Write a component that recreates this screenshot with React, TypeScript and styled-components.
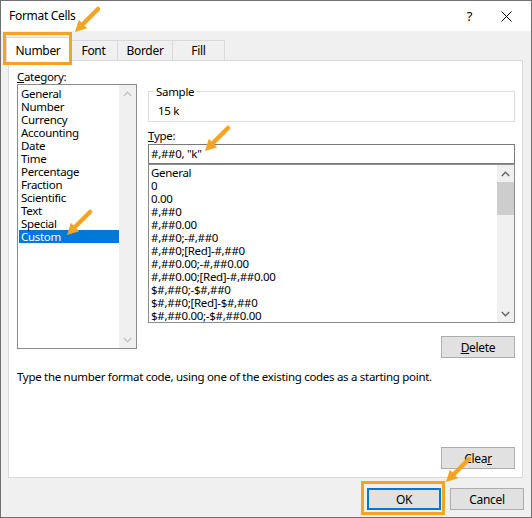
import * as React from "react";
import styled, { createGlobalStyle } from "styled-components";

const GlobalStyle = createGlobalStyle`
  html, body {
    margin: 0;
    padding: 0;
    background: #ffffff;
  }
`;

const ORANGE = "#f4a423";
const FONT = `"Noto Sans", "Open Sans", sans-serif`;

const Window = styled.div`
  position: relative;
  width: 532px;
  height: 518px;
  box-sizing: border-box;
  border: 1px solid #6f6f6f;
  display: flex;
  flex-direction: column;
  background: #f0f0f0;
  font-family: ${FONT};
  font-size: 11.5px;
  letter-spacing: -0.3px;
  color: #000;
`;

const TitleBar = styled.div`
  height: 30px;
  flex-shrink: 0;
  display: flex;
  align-items: center;
  padding: 0 19px 0 8px;
  background: #ffffff;
`;

const Title = styled.span`
  font-size: 12px;
  line-height: 14px;
`;

const TitleControls = styled.div`
  margin-left: auto;
  display: flex;
  align-items: center;
  gap: 29px;
`;

const HelpGlyph = styled.span`
  font-size: 13px;
  line-height: 14px;
`;

const Body = styled.div`
  flex: 1;
  display: flex;
  flex-direction: column;
  padding: 0 8px 0 5px;
`;

const TabRow = styled.div`
  display: flex;
  align-items: flex-end;
  height: 23px;
  margin-top: 6px;
`;

const Tab = styled.div<{ $active?: boolean; $w: number }>`
  width: ${(p) => p.$w}px;
  height: ${(p) => (p.$active ? 24 : 20)}px;
  box-sizing: border-box;
  display: flex;
  align-items: center;
  justify-content: center;
  border: 1px solid #d9d9d9;
  border-bottom: none;
  margin-left: ${(p) => (p.$active ? 0 : -1)}px;
  margin-bottom: ${(p) => (p.$active ? -1 : 0)}px;
  background: ${(p) => (p.$active ? "#ffffff" : "#f0f0f0")};
  position: relative;
  z-index: ${(p) => (p.$active ? 2 : 1)};
  font-size: 12px;
  padding-top: ${(p) => (p.$active ? 1 : 0)}px;
`;

const Panel = styled.div`
  height: 418px;
  margin-left: 2px;
  box-sizing: border-box;
  background: #ffffff;
  border: 1px solid #d9d9d9;
  padding: 8px 7px 8px 8px;
  display: flex;
  flex-direction: column;
`;

const Columns = styled.div`
  display: grid;
  grid-template-columns: 120px 1fr;
  column-gap: 11px;
`;

const Column = styled.div<{ $offset?: number }>`
  display: flex;
  flex-direction: column;
  padding-top: ${(p) => p.$offset ?? 0}px;
`;

const Label = styled.div<{ $mt?: number }>`
  line-height: 15px;
  margin-top: ${(p) => p.$mt ?? 0}px;
`;

const ListBox = styled.div<{ $h: number }>`
  height: ${(p) => p.$h}px;
  box-sizing: border-box;
  border: 1px solid #8c8c8c;
  display: flex;
  background: #ffffff;
`;

const Items = styled.div<{ $pad: string }>`
  flex: 1;
  padding: ${(p) => p.$pad};
  overflow: hidden;
`;

const Item = styled.div<{ $selected?: boolean }>`
  height: 13px;
  line-height: 13px;
  padding-left: 2px;
  white-space: nowrap;
  background: ${(p) => (p.$selected ? "#0078d7" : "transparent")};
  color: ${(p) => (p.$selected ? "#ffffff" : "#000000")};
`;

const ScrollBar = styled.div`
  width: 17px;
  flex-shrink: 0;
  display: flex;
  flex-direction: column;
  background: #f0f0f0;
`;

const ScrollArrow = styled.div`
  height: 17px;
  display: flex;
  align-items: center;
  justify-content: center;
  flex-shrink: 0;
`;

const ScrollTrack = styled.div`
  flex: 1;
`;

const ScrollThumb = styled.div`
  height: 33px;
  background: #cdcdcd;
`;

const GroupBox = styled.fieldset`
  margin: 0;
  height: 38px;
  box-sizing: border-box;
  border: 1px solid #dcdcdc;
  padding: 4px 8px 0 9px;
`;

const Legend = styled.legend`
  padding: 0 2px;
  margin-left: -4px;
  line-height: 15px;
`;

const SampleValue = styled.div`
  line-height: 15px;
`;

const TextInput = styled.div`
  height: 20px;
  margin-top: 1px;
  box-sizing: border-box;
  border: 1px solid #7a7a7a;
  padding: 0 2px;
  line-height: 18px;
  white-space: pre;
`;

const Button = styled.div<{ $default?: boolean }>`
  width: 74px;
  height: 22px;
  box-sizing: border-box;
  display: flex;
  align-items: center;
  justify-content: center;
  background: #e1e1e1;
  border: 1px solid ${(p) => (p.$default ? "#0078d7" : "#adadad")};
  box-shadow: ${(p) => (p.$default ? "inset 0 0 0 1px #0078d7" : "none")};
  font-size: 12px;
  flex-shrink: 0;
`;

const RightAligned = styled.div<{ $mt?: number }>`
  display: flex;
  justify-content: flex-end;
  margin-top: ${(p) => p.$mt ?? 0}px;
`;

const Description = styled.div`
  margin-top: 11px;
  line-height: 15px;
  white-space: nowrap;
`;

const Spacer = styled.div`
  flex: 1;
`;

const Footer = styled.div`
  flex: 1;
  display: flex;
  justify-content: flex-end;
  align-items: flex-start;
  gap: 9px;
  padding-top: 10px;
  margin-right: -1px;
`;

const HighlightBox = styled.div<{ $x: number; $y: number; $w: number; $h: number }>`
  position: absolute;
  left: ${(p) => p.$x}px;
  top: ${(p) => p.$y}px;
  width: ${(p) => p.$w}px;
  height: ${(p) => p.$h}px;
  box-sizing: border-box;
  border: 3px solid ${ORANGE};
  pointer-events: none;
  z-index: 5;
`;

const ArrowWrap = styled.svg<{ $x: number; $y: number }>`
  position: absolute;
  left: ${(p) => p.$x}px;
  top: ${(p) => p.$y}px;
  width: 30px;
  height: 30px;
  z-index: 6;
  pointer-events: none;
`;

// tip of the arrow sits at (2, 28) inside the svg
const Arrow = ({ tipX, tipY }: { tipX: number; tipY: number }) => (
  <ArrowWrap $x={tipX - 3} $y={tipY - 29} viewBox="0 0 30 30">
    <line x1="25" y1="5" x2="10" y2="20" stroke={ORANGE} strokeWidth="4.5" strokeLinecap="round" />
    <polygon points="2,28 14.2,24.2 5.8,15.8" fill={ORANGE} />
  </ArrowWrap>
);

const Chevron = ({ up, color }: { up?: boolean; color: string }) => (
  <svg width="9" height="6" viewBox="0 0 9 6">
    <polyline
      points={up ? "0.8,5 4.5,1.2 8.2,5" : "0.8,1 4.5,4.8 8.2,1"}
      fill="none"
      stroke={color}
      strokeWidth="1.3"
    />
  </svg>
);

const CloseIcon = () => (
  <svg width="11" height="11" viewBox="0 0 11 11">
    <path d="M0.5 0.5 L10.5 10.5 M10.5 0.5 L0.5 10.5" stroke="#000" strokeWidth="1" />
  </svg>
);

const categories = [
  "General",
  "Number",
  "Currency",
  "Accounting",
  "Date",
  "Time",
  "Percentage",
  "Fraction",
  "Scientific",
  "Text",
  "Special",
  "Custom",
];

const formats = [
  "General",
  "0",
  "0.00",
  "#,##0",
  "#,##0.00",
  "#,##0;-#,##0",
  "#,##0;[Red]-#,##0",
  "#,##0.00;-#,##0.00",
  "#,##0.00;[Red]-#,##0.00",
  "$#,##0;-$#,##0",
  "$#,##0;[Red]-$#,##0",
  "$#,##0.00;-$#,##0.00",
];

const tabs = [
  { label: "Number", w: 64 },
  { label: "Font", w: 49 },
  { label: "Border", w: 56 },
  { label: "Fill", w: 53 },
];

const App = () => (
  <>
    <GlobalStyle />
    <Window>
      <TitleBar>
        <Title>Format Cells</Title>
        <TitleControls>
          <HelpGlyph>?</HelpGlyph>
          <CloseIcon />
        </TitleControls>
      </TitleBar>
      <Body>
        <TabRow>
          {tabs.map((t, i) => (
            <Tab key={t.label} $w={t.w} $active={i === 0}>
              {t.label}
            </Tab>
          ))}
        </TabRow>
        <Panel>
          <Columns>
            <Column>
              <Label>
                <u>C</u>ategory:
              </Label>
              <ListBox $h={265}>
                <Items $pad="2px 0 0 1px">
                  {categories.map((c) => (
                    <Item key={c} $selected={c === "Custom"}>
                      {c}
                    </Item>
                  ))}
                </Items>
                <ScrollBar>
                  <ScrollArrow>
                    <Chevron up color="#c2c2c2" />
                  </ScrollArrow>
                  <ScrollTrack />
                  <ScrollArrow>
                    <Chevron color="#c2c2c2" />
                  </ScrollArrow>
                </ScrollBar>
              </ListBox>
            </Column>
            <Column $offset={15}>
              <GroupBox>
                <Legend>Sample</Legend>
                <SampleValue>15 k</SampleValue>
              </GroupBox>
              <Label $mt={6}>
                <u>T</u>ype:
              </Label>
              <TextInput>#,##0, "k"</TextInput>
              <ListBox $h={159}>
                <Items $pad="1px 0 0 0">
                  {formats.map((f) => (
                    <Item key={f}>{f}</Item>
                  ))}
                </Items>
                <ScrollBar>
                  <ScrollArrow>
                    <Chevron up color="#606060" />
                  </ScrollArrow>
                  <ScrollThumb />
                  <ScrollTrack />
                  <ScrollArrow>
                    <Chevron color="#606060" />
                  </ScrollArrow>
                </ScrollBar>
              </ListBox>
              <RightAligned $mt={13}>
                <Button>
                  <u>D</u>elete
                </Button>
              </RightAligned>
            </Column>
          </Columns>
          <Description>
            Type the number format code, using one of the existing codes as a starting point.
          </Description>
          <Spacer />
          <RightAligned>
            <Button>
              Clea<u>r</u>
            </Button>
          </RightAligned>
        </Panel>
        <Footer>
          <Button $default>OK</Button>
          <Button>Cancel</Button>
        </Footer>
      </Body>
      <HighlightBox $x={2} $y={31} $w={69} $h={33} />
      <HighlightBox $x={360} $y={480} $w={84} $h={34} />
      <Arrow tipX={75} tipY={32} />
      <Arrow tipX={67} tipY={235} />
      <Arrow tipX={205} tipY={151} />
      <Arrow tipX={446} tipY={482} />
    </Window>
  </>
);

export default App;
